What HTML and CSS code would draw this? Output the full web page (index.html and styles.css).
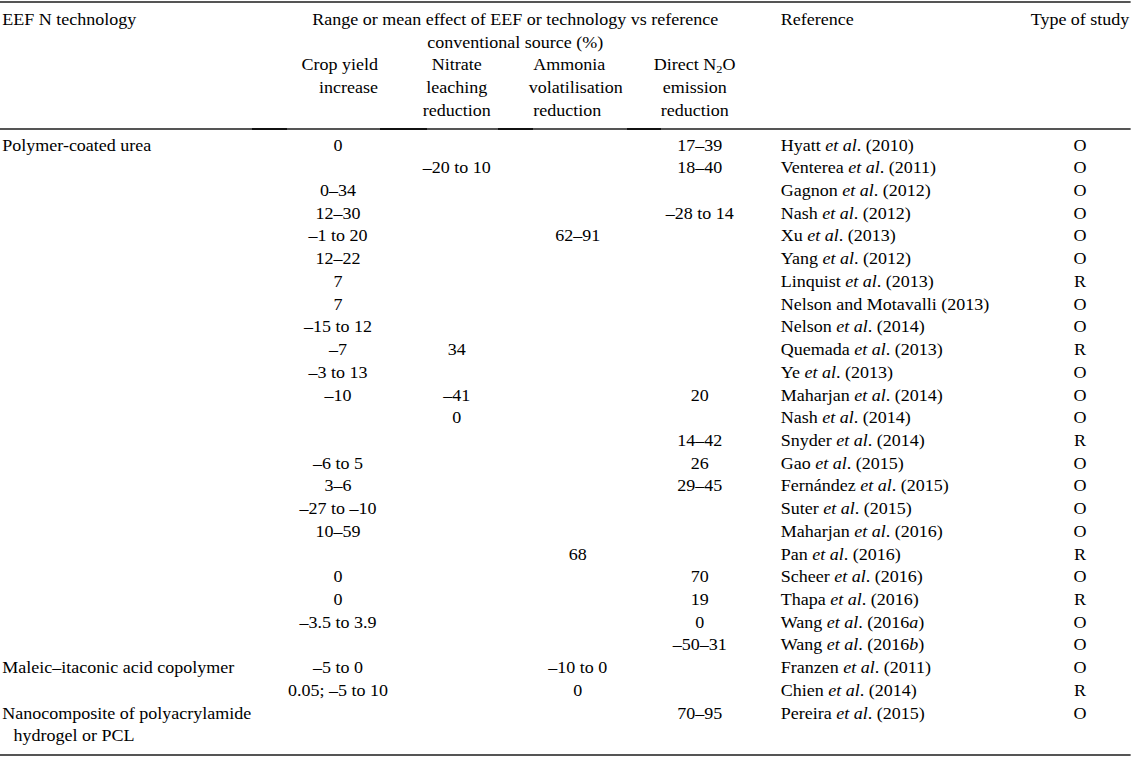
FILE: index.html
```html
<!DOCTYPE html>
<html lang="en">
<head>
<meta charset="utf-8">
<title>EEF N technology table</title>
<link rel="stylesheet" href="styles.css">
</head>
<body>
<div class="sheet">
<table class="data head">
  <colgroup>
    <col class="c-tech">
    <col class="c-crop">
    <col class="c-nit">
    <col class="c-amm">
    <col class="c-n2o">
    <col class="c-ref">
    <col class="c-type">
  </colgroup>
  <thead>
    <tr>
      <th rowspan="2" class="h-tech">EEF N technology</th>
      <th colspan="4" class="h-range">Range or mean effect of EEF or technology vs reference<br>conventional source (%)</th>
      <th rowspan="2" class="h-ref">Reference</th>
      <th rowspan="2" class="h-type">Type of study</th>
    </tr>
    <tr>
      <th class="h-sub h-crop">Crop yield<br>increase</th>
      <th class="h-sub h-nit">Nitrate<br>leaching<br>reduction</th>
      <th class="h-sub h-amm"><span class="shift">Ammonia</span><span>volatilisation</span><span class="shift">reduction</span></th>
      <th class="h-sub h-n2o">Direct N<sub>2</sub>O<br>emission<br>reduction</th>
    </tr>
  </thead>
</table>
<div class="midrule"></div>
<table class="data body">
  <colgroup>
    <col class="c-tech">
    <col class="c-crop">
    <col class="c-nit">
    <col class="c-amm">
    <col class="c-n2o">
    <col class="c-ref">
    <col class="c-type">
  </colgroup>
  <tbody>
    <tr><td class="tech">Polymer-coated urea</td><td class="num">0</td><td class="num"></td><td class="num"></td><td class="num">17–39</td><td class="ref">Hyatt <i>et al</i>. (2010)</td><td class="type">O</td></tr>
    <tr><td class="tech"></td><td class="num"></td><td class="num">–20 to 10</td><td class="num"></td><td class="num">18–40</td><td class="ref">Venterea <i>et al</i>. (2011)</td><td class="type">O</td></tr>
    <tr><td class="tech"></td><td class="num">0–34</td><td class="num"></td><td class="num"></td><td class="num"></td><td class="ref">Gagnon <i>et al</i>. (2012)</td><td class="type">O</td></tr>
    <tr><td class="tech"></td><td class="num">12–30</td><td class="num"></td><td class="num"></td><td class="num">–28 to 14</td><td class="ref">Nash <i>et al</i>. (2012)</td><td class="type">O</td></tr>
    <tr><td class="tech"></td><td class="num">–1 to 20</td><td class="num"></td><td class="num">62–91</td><td class="num"></td><td class="ref">Xu <i>et al</i>. (2013)</td><td class="type">O</td></tr>
    <tr><td class="tech"></td><td class="num">12–22</td><td class="num"></td><td class="num"></td><td class="num"></td><td class="ref">Yang <i>et al</i>. (2012)</td><td class="type">O</td></tr>
    <tr><td class="tech"></td><td class="num">7</td><td class="num"></td><td class="num"></td><td class="num"></td><td class="ref">Linquist <i>et al</i>. (2013)</td><td class="type">R</td></tr>
    <tr><td class="tech"></td><td class="num">7</td><td class="num"></td><td class="num"></td><td class="num"></td><td class="ref">Nelson and Motavalli (2013)</td><td class="type">O</td></tr>
    <tr><td class="tech"></td><td class="num">–15 to 12</td><td class="num"></td><td class="num"></td><td class="num"></td><td class="ref">Nelson <i>et al</i>. (2014)</td><td class="type">O</td></tr>
    <tr><td class="tech"></td><td class="num">–7</td><td class="num">34</td><td class="num"></td><td class="num"></td><td class="ref">Quemada <i>et al</i>. (2013)</td><td class="type">R</td></tr>
    <tr><td class="tech"></td><td class="num">–3 to 13</td><td class="num"></td><td class="num"></td><td class="num"></td><td class="ref">Ye <i>et al</i>. (2013)</td><td class="type">O</td></tr>
    <tr><td class="tech"></td><td class="num">–10</td><td class="num">–41</td><td class="num"></td><td class="num">20</td><td class="ref">Maharjan <i>et al</i>. (2014)</td><td class="type">O</td></tr>
    <tr><td class="tech"></td><td class="num"></td><td class="num">0</td><td class="num"></td><td class="num"></td><td class="ref">Nash <i>et al</i>. (2014)</td><td class="type">O</td></tr>
    <tr><td class="tech"></td><td class="num"></td><td class="num"></td><td class="num"></td><td class="num">14–42</td><td class="ref">Snyder <i>et al</i>. (2014)</td><td class="type">R</td></tr>
    <tr><td class="tech"></td><td class="num">–6 to 5</td><td class="num"></td><td class="num"></td><td class="num">26</td><td class="ref">Gao <i>et al</i>. (2015)</td><td class="type">O</td></tr>
    <tr><td class="tech"></td><td class="num">3–6</td><td class="num"></td><td class="num"></td><td class="num">29–45</td><td class="ref">Fernández <i>et al</i>. (2015)</td><td class="type">O</td></tr>
    <tr><td class="tech"></td><td class="num">–27 to –10</td><td class="num"></td><td class="num"></td><td class="num"></td><td class="ref">Suter <i>et al</i>. (2015)</td><td class="type">O</td></tr>
    <tr><td class="tech"></td><td class="num">10–59</td><td class="num"></td><td class="num"></td><td class="num"></td><td class="ref">Maharjan <i>et al</i>. (2016)</td><td class="type">O</td></tr>
    <tr><td class="tech"></td><td class="num"></td><td class="num"></td><td class="num">68</td><td class="num"></td><td class="ref">Pan <i>et al</i>. (2016)</td><td class="type">R</td></tr>
    <tr><td class="tech"></td><td class="num">0</td><td class="num"></td><td class="num"></td><td class="num">70</td><td class="ref">Scheer <i>et al</i>. (2016)</td><td class="type">O</td></tr>
    <tr><td class="tech"></td><td class="num">0</td><td class="num"></td><td class="num"></td><td class="num">19</td><td class="ref">Thapa <i>et al</i>. (2016)</td><td class="type">R</td></tr>
    <tr><td class="tech"></td><td class="num">–3.5 to 3.9</td><td class="num"></td><td class="num"></td><td class="num">0</td><td class="ref">Wang <i>et al</i>. (2016<i>a</i>)</td><td class="type">O</td></tr>
    <tr><td class="tech"></td><td class="num"></td><td class="num"></td><td class="num"></td><td class="num">–50–31</td><td class="ref">Wang <i>et al</i>. (2016<i>b</i>)</td><td class="type">O</td></tr>
    <tr><td class="tech">Maleic–itaconic acid copolymer</td><td class="num">–5 to 0</td><td class="num"></td><td class="num">–10 to 0</td><td class="num"></td><td class="ref">Franzen <i>et al</i>. (2011)</td><td class="type">O</td></tr>
    <tr><td class="tech"></td><td class="num">0.05; –5 to 10</td><td class="num"></td><td class="num">0</td><td class="num"></td><td class="ref">Chien <i>et al</i>. (2014)</td><td class="type">R</td></tr>
    <tr class="last"><td class="tech">Nanocomposite of polyacrylamide hydrogel or PCL</td><td class="num"></td><td class="num"></td><td class="num"></td><td class="num">70–95</td><td class="ref">Pereira <i>et al</i>. (2015)</td><td class="type">O</td></tr>
  </tbody>
</table>
</div>
</body>
</html>
```

FILE: styles.css
```css
html, body {
  margin: 0;
  padding: 0;
  background: #ffffff;
}

.sheet {
  width: 1005px;
  margin-top: 1px;
  border-top: 2px solid #555555;
  border-bottom: 2px solid #555555;
  transform: scaleX(1.125);
  transform-origin: 0 0;
}

.data {
  width: 1005px;
  table-layout: fixed;
  border-collapse: separate;
  border-spacing: 0;
  font-family: "Liberation Serif", "Times New Roman", serif;
  font-size: 16px;
  line-height: 22.72px;
  color: #000000;
}

.c-tech { width: 250px; }
.c-crop { width: 101px; }
.c-nit  { width: 110px; }
.c-amm  { width: 105px; }
.c-n2o  { width: 112px; }
.c-ref  { width: 237px; }
.c-type { width: 90px; }

.midrule {
  height: 2px;
  background: linear-gradient(to right,
    #555555 0, #555555 224px,
    #111111 224px, #111111 255px,
    #555555 255px, #555555 338px,
    #111111 338px, #111111 380px,
    #555555 380px, #555555 443px,
    #111111 443px, #111111 474px,
    #555555 474px, #555555 557px,
    #111111 557px, #111111 588px,
    #555555 588px, #555555 100%);
}

.data th {
  font-weight: normal;
  vertical-align: top;
  padding: 0;
}

.data thead tr:first-child th {
  padding-top: 6px;
}

.data th.h-sub {
  padding-bottom: 5px;
}

.h-tech {
  text-align: left;
  padding-left: 2px !important;
}

.h-range {
  text-align: center;
  padding-right: 12px !important;
}

.h-crop {
  text-align: right;
  padding-right: 15px !important;
}

.h-nit {
  text-align: center;
}

.h-amm {
  text-align: left;
  padding-left: 9px !important;
}

.h-amm span {
  display: block;
}

.h-amm .shift {
  padding-left: 4px;
}

.h-n2o {
  text-align: center;
  padding-right: 9px !important;
}

.h-ref {
  text-align: left;
  padding-left: 16px !important;
}

.h-type {
  text-align: center;
}

.data sub {
  font-size: 11px;
  line-height: 0;
  vertical-align: -3px;
}

.data td {
  padding: 0;
  vertical-align: top;
  white-space: nowrap;
}

.body tbody tr:first-child td {
  padding-top: 5px;
}

.body tbody tr.last td {
  padding-bottom: 6px;
}

.data td.tech {
  text-align: left;
  white-space: normal;
  padding-left: 12px;
  text-indent: -10px;
}

.data td.num {
  text-align: center;
}

.data td.ref {
  text-align: left;
  padding-left: 16px;
}

.data td.type {
  text-align: center;
}
```
